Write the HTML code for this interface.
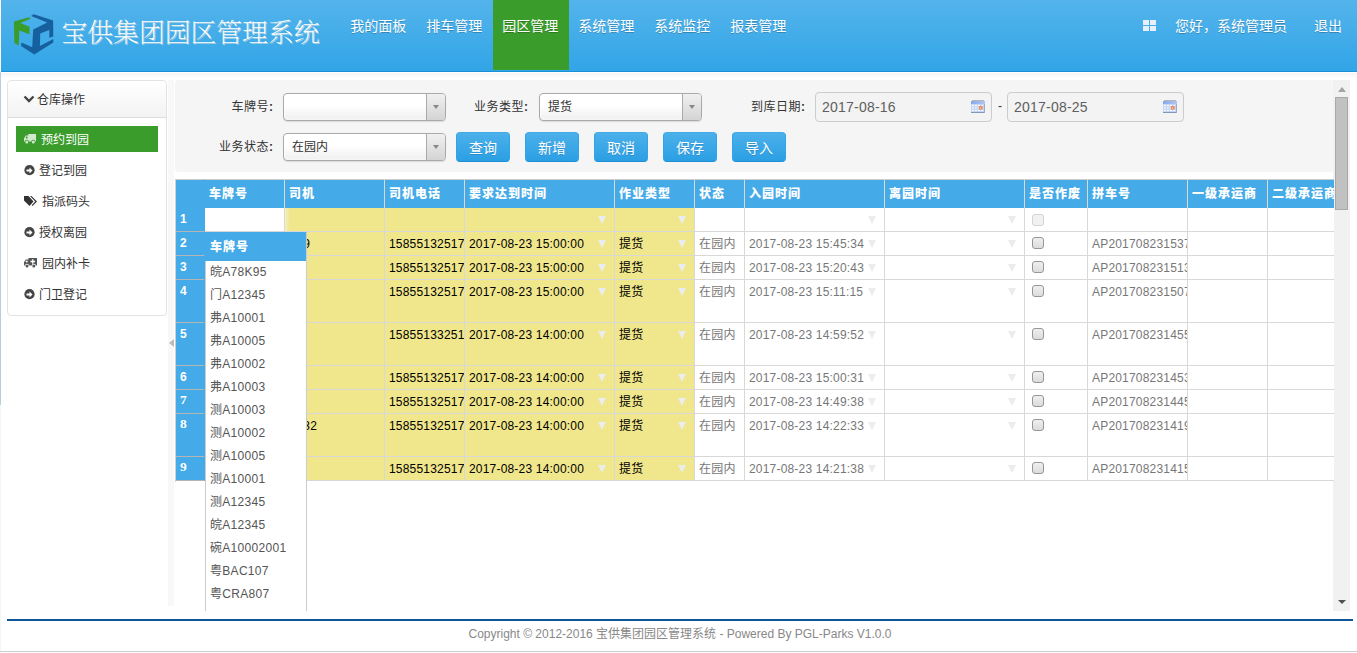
<!DOCTYPE html>
<html lang="zh-CN">
<head>
<meta charset="utf-8">
<title>宝供集团园区管理系统</title>
<style>
*{box-sizing:border-box;margin:0;padding:0}
html,body{width:1357px;height:653px;overflow:hidden;background:#fff}
body{font-family:"Liberation Sans","Noto Sans CJK SC",sans-serif;font-size:13px;color:#333;position:relative}
.abs{position:absolute}
/* header */
#hdr{position:absolute;left:1px;top:0;width:1356px;height:72px;background:linear-gradient(#54b4eb,#31a5e7);border-bottom:1px solid #1a90d8}
#title{position:absolute;left:60.5px;top:14px;font-family:"Liberation Serif","Noto Serif CJK SC",serif;font-weight:200;font-size:25.8px;line-height:40px;color:#fff;white-space:nowrap;letter-spacing:0;text-shadow:1px 1px 0 rgba(255,235,220,.55)}
.nav{padding-right:1.500px;text-shadow:0 1px 0 rgba(0,0,0,.22);position:absolute;top:0;height:70px;line-height:52px;color:#fff;font-size:14px;white-space:nowrap;text-align:center}
.nav.act{background:#3a9d2b}
/* sidebar */
#side{position:absolute;left:7px;top:80px;width:160px;height:236px;border:1px solid #e3e3e3;border-radius:4px;background:#fff}
#side .hd{height:37px;border-bottom:1px solid #ddd;background:linear-gradient(#fff,#f3f3f3);border-radius:4px 4px 0 0;line-height:38px;padding-left:15px;color:#333;font-size:12px}
.mi{position:absolute;left:8px;width:142px;height:26px;line-height:28px;font-size:12px;color:#333;white-space:nowrap}
.mi.on{background:#3a9d2b;color:#fff}
.mi svg{position:absolute;left:8px;top:8px}
.mi span{position:absolute;left:23px;top:0}
/* filter */
#flt{position:absolute;left:175px;top:80px;width:1159px;height:92px;background:#f5f5f5;border-radius:4px}
.lbl{position:absolute;letter-spacing:.5px;margin-left:-1.500px;font-size:12px;color:#333;line-height:20px;text-align:right;white-space:nowrap}
.sel{position:absolute;height:28px;width:163px;border:1px solid #aaa;border-radius:4px;background:linear-gradient(#fff 45%,#f5f5f5 80%,#f0f0f0);box-shadow:0 0 3px #fff inset,0 1px 1px rgba(0,0,0,.1);font-size:12px;line-height:26px;padding-left:8px;color:#333}
.sel i{position:absolute;right:0;top:0;width:19px;height:26px;border-left:1px solid #aaa;border-radius:0 3px 3px 0;background:linear-gradient(#f0f0f0,#d4d4d4)}
.sel i:after{content:"";position:absolute;left:5.500px;top:11px;border:3.300px solid transparent;border-top:4.500px solid #888;border-bottom:0}
.dt{position:absolute;height:30px;width:177px;border:1px solid #ccc;border-radius:4px;background:#f3f3f3;font-size:14px;line-height:28px;padding-left:6px;color:#606060;letter-spacing:.22px}
.dt svg{position:absolute;right:6px;top:7px}
.btn{position:absolute;height:30px;width:54px;border-radius:4px;background:linear-gradient(#4cb0ea,#2b9fe4);border:1px solid #2fa4e7;border-top-color:#45abe8;border-bottom-color:#2090d6;color:#fff;font-size:14px;line-height:30px;text-align:center;text-shadow:0 1px 0 rgba(0,0,0,.15)}
/* grid */
#grid{position:absolute;left:176px;top:179px;width:1158px;height:303px;overflow:hidden;font-size:12px}
.row{position:absolute;left:0;width:1200px}
.c{position:absolute;top:0;height:100%;border-right:1px solid #d8d8d8;border-bottom:1px solid #d8d8d8;overflow:hidden;white-space:nowrap;padding:0 4px;line-height:24px;font-size:12px;letter-spacing:.19px}
.h .c{background:#45aae8;color:#fff;font-weight:900;line-height:28px;font-size:12px;border-top:1px solid #ccc;border-bottom:0;letter-spacing:1px}
.h .c:first-child{border-right-color:#45aae8}
.c.rh{background:#45aae8;color:#fff;font-weight:bold;font-size:12px;border-right-color:#45aae8;border-bottom-color:#b5b5b5;padding-left:4px;line-height:23px}
.y{background:#f0e68c;color:#000}
.g{color:#777;background:#fff}
.w{background:#fff}
.ar:after{content:"";position:absolute;right:8px;top:8px;border-left:4.200px solid transparent;border-right:4.200px solid transparent;border-top:8px solid #ececec}
.cb{position:absolute;left:7px;top:5px;width:12px;height:12px;border:1px solid #979797;border-radius:3px;background:linear-gradient(#efefef,#dcdcdc)}
.cb.dis{top:6px;border-color:#d3d3d3;background:#f1f1f1}
.c.rh.sf{font-family:"Liberation Serif",serif;font-size:13.500px;line-height:20px}
/* dropdown */
#dd{position:absolute;left:205px;top:232px;width:102px;height:379px;background:#fff;border-left:1px solid #ccc;border-right:1px solid #ccc}
#dd .t{letter-spacing:1px;height:29px;overflow:hidden;background:#45aae8;color:#fff;font-weight:900;font-size:12px;line-height:31px;padding-left:5px;width:101px;margin-left:-1px}
#dd .o{height:23px;line-height:22px;padding-left:4px;font-size:12px;color:#555;white-space:nowrap;letter-spacing:.3px}
/* footer */
#ftl{position:absolute;left:7px;top:619px;width:1346px;height:2px;background:#0d5799}
#ft{position:absolute;left:7px;top:621px;width:1346px;height:26px;line-height:26px;text-align:center;font-size:12px;color:#888}
#btm{position:absolute;left:0;top:651px;width:1357px;height:1px;background:#ccc}
</style>
</head>
<body>
<div class="abs" style="left:0;top:72px;width:1px;height:333px;background:#b9cedc"></div>
<div class="abs" style="left:0;top:405px;width:1px;height:246px;background:#f3f5f6"></div>
<div id="hdr">
<svg class="abs" style="left:0;top:0" width="70" height="71" viewBox="1 0 70 71"><polygon fill="#3a9d2b" points="13.9,21.4 29,17.2 30.6,18.8 20.4,23 29.5,26.8 29.5,34.3 19.3,30.6 18.8,45.6 14.3,42.9"/><polygon fill="#17609f" points="31.1,15.9 33.8,14.3 53.1,20.4 53.3,36.5 49.3,37.7 49.3,30 40.2,33.5 39.9,45.9 53.3,39.1 53.3,42.4 34.3,54.4 21.1,46.1 21.4,42.4 32.2,47.2 33.2,29.5 47.2,22.5"/></svg>
<div id="title">宝供集团园区管理系统</div>
<div class="nav" style="left:340px;width:76px">我的面板</div>
<div class="nav" style="left:416px;width:76px">排车管理</div>
<div class="nav act" style="left:492px;width:76px">园区管理</div>
<div class="nav" style="left:568px;width:76px">系统管理</div>
<div class="nav" style="left:644px;width:76px">系统监控</div>
<div class="nav" style="left:720px;width:76px">报表管理</div>
<svg class="abs" style="left:1142px;top:20px" width="14" height="12"><rect x="0" y="0" width="6" height="5" fill="#e6effb"/><rect x="7" y="0" width="6" height="5" fill="#e6effb"/><rect x="0" y="6" width="6" height="5" fill="#e6effb"/><rect x="7" y="6" width="6" height="5" fill="#e6effb"/></svg>
<div class="nav" style="left:1174px;width:112px;text-align:left">您好，系统管理员</div>
<div class="nav" style="left:1313px;width:30px;text-align:left">退出</div>
</div>

<div id="side">
<div class="hd"><svg width="12" height="10" viewBox="0 0 12 10" style="margin-right:2px"><path d="M1.500 2.500 L6 7 L10.500 2.500" fill="none" stroke="#444" stroke-width="2.400"/></svg>仓库操作</div>
<div class="mi on" style="top:45px"><svg width="12" height="10" viewBox="0 0 12 10"><path fill="#d3e9cf" d="M4.300 0H12V7.500H0V4.200L1.800 1.500H4.300z"/><rect x="1.800" y="2.600" width="1.700" height="1.800" fill="#3a9d2b"/><circle cx="2.800" cy="7.900" r="2.100" fill="#3a9d2b"/><circle cx="9.300" cy="7.900" r="2.100" fill="#3a9d2b"/><circle cx="2.800" cy="8" r="1.500" fill="#d3e9cf"/><circle cx="9.300" cy="8" r="1.500" fill="#d3e9cf"/></svg><span style="left:25px">预约到园</span></div>
<div class="mi" style="top:76px"><svg width="11" height="11" viewBox="0 0 11 11"><circle cx="5.500" cy="5.200" r="5.100" fill="#444"/><path d="M2.5 4.5h3V2.5l3 3-3 3V6.500h-3z" fill="#fff"/></svg><span>登记到园</span></div>
<div class="mi" style="top:107px"><svg width="14" height="11" viewBox="0 0 14 11"><path fill="#333" d="M0 0h4.500l5 5.500-4 4.500-5.500-5.500z M6 0h1.500l5.500 5.500-4.500 4.500-.8-.8 3.500-3.700z"/></svg><span style="left:26px">指派码头</span></div>
<div class="mi" style="top:138px"><svg width="11" height="11" viewBox="0 0 11 11"><circle cx="5.500" cy="5.200" r="5.100" fill="#444"/><path d="M2.5 4.500h3V2.500l3 3-3 3V6.500h-3z" fill="#fff"/></svg><span>授权离园</span></div>
<div class="mi" style="top:169px"><svg width="13" height="10" viewBox="0 0 13 10"><path fill="#555" d="M4.500 0H13V7.500H0V4.200L1.800 1.500H4.500z"/><rect x="1.800" y="2.600" width="1.800" height="1.800" fill="#fff"/><path d="M6.500 3.500h4.500M8.750 1.200v4.600" stroke="#fff" stroke-width="1.300"/><circle cx="3" cy="7.900" r="2.100" fill="#fff"/><circle cx="9.800" cy="7.900" r="2.100" fill="#fff"/><circle cx="3" cy="8" r="1.500" fill="#555"/><circle cx="9.800" cy="8" r="1.500" fill="#555"/></svg><span style="left:26px">园内补卡</span></div>
<div class="mi" style="top:200px"><svg width="11" height="11" viewBox="0 0 11 11"><circle cx="5.500" cy="5.200" r="5.100" fill="#444"/><path d="M2.500 4.500h3V2.500l3 3-3 3V6.500h-3z" fill="#fff"/></svg><span>门卫登记</span></div>
</div>

<!-- splitter -->
<div class="abs" style="left:1px;top:73px;width:1356px;height:6px;background:linear-gradient(#f5f5f5,#fff)"></div>
<div class="abs" style="left:168px;top:80px;width:6px;height:526px;background:#f8f8f8"></div>
<div class="abs" style="left:169px;top:339px;border:4px solid transparent;border-right:5px solid #bbb;border-left:0"></div>

<div id="flt">
<div class="lbl" style="left:30px;top:17px;width:70px">车牌号<b>:</b></div>
<div class="sel" style="left:108px;top:13px"><i></i></div>
<div class="lbl" style="left:285px;top:17px;width:70px">业务类型<b>:</b></div>
<div class="sel" style="left:364px;top:13px">提货<i></i></div>
<div class="lbl" style="left:560px;top:17px;width:72px">到库日期<b>:</b></div>
<div class="dt" style="left:640px;top:12px">2017-08-16<svg width="14" height="13" viewBox="0 0 14 13"><defs><linearGradient id="cg" x1="0" y1="0" x2="1" y2="0"><stop offset="0" stop-color="#84a7ee"/><stop offset="1" stop-color="#adc6f4"/></linearGradient></defs><rect x="1" y="0" width="12" height="1.200" fill="#b5b5b5"/><rect x="0" y="1" width="14" height="12" fill="#c5d6f2"/><rect x="0" y="1" width="14" height="3" fill="url(#cg)"/><path d="M1 5.500h12M1 8h12M1 10.500h12" stroke="#fff" stroke-width="1.200" stroke-dasharray="1.800 1.200"/><rect x="0" y="12" width="14" height="1" fill="#8197b9"/><rect x="13" y="4" width="1" height="9" fill="#9aaccb"/><circle cx="9.800" cy="7.700" r="2.100" fill="#e8825f"/><rect x="9.500" y="6.600" width=".7" height="2.200" fill="#fbe3d8"/></svg></div>
<div class="lbl" style="left:824.5px;top:16px">-</div>
<div class="dt" style="left:832px;top:12px">2017-08-25<svg width="14" height="13" viewBox="0 0 14 13"><rect x="1" y="0" width="12" height="1.200" fill="#b5b5b5"/><rect x="0" y="1" width="14" height="12" fill="#c5d6f2"/><rect x="0" y="1" width="14" height="3" fill="url(#cg)"/><path d="M1 5.500h12M1 8h12M1 10.500h12" stroke="#fff" stroke-width="1.200" stroke-dasharray="1.800 1.200"/><rect x="0" y="12" width="14" height="1" fill="#8197b9"/><rect x="13" y="4" width="1" height="9" fill="#9aaccb"/><circle cx="9.800" cy="7.700" r="2.100" fill="#e8825f"/><rect x="9.500" y="6.600" width=".7" height="2.200" fill="#fbe3d8"/></svg></div>
<div class="lbl" style="left:30px;top:57px;width:70px">业务状态<b>:</b></div>
<div class="sel" style="left:108px;top:53px">在园内<i></i></div>
<div class="btn" style="left:281px;top:52px">查询</div>
<div class="btn" style="left:350px;top:52px">新增</div>
<div class="btn" style="left:419px;top:52px">取消</div>
<div class="btn" style="left:488px;top:52px">保存</div>
<div class="btn" style="left:557px;top:52px">导入</div>
</div>

<!-- scrollbar -->
<div class="abs" style="left:1333px;top:80px;width:17px;height:531px;background:#f1f1f1"></div>
<div class="abs" style="left:1335px;top:97px;width:13px;height:113px;background:#c1c1c1;border:1px solid #a8a8a8"></div>
<div class="abs" style="left:1337.500px;top:86.500px;border:4px solid transparent;border-bottom:5px solid #a3a3a3;border-top:0"></div>
<div class="abs" style="left:1337.500px;top:600px;border:4px solid transparent;border-top:4.500px solid #505050;border-bottom:0"></div>

<div class="abs" style="left:175px;top:179px;width:1px;height:303px;background:#d0d0d0"></div>
<div id="grid">
<div class="row h" style="top:0;height:29px">
<div class="c" style="left:0px;width:29px"></div>
<div class="c" style="left:29px;width:80px">车牌号</div>
<div class="c" style="left:109px;width:100px">司机</div>
<div class="c" style="left:209px;width:80px">司机电话</div>
<div class="c" style="left:289px;width:150px">要求达到时间</div>
<div class="c" style="left:439px;width:80px">作业类型</div>
<div class="c" style="left:519px;width:50px">状态</div>
<div class="c" style="left:569px;width:140px">入园时间</div>
<div class="c" style="left:709px;width:140px">离园时间</div>
<div class="c" style="left:849px;width:63px">是否作废</div>
<div class="c" style="left:912px;width:100px">拼车号</div>
<div class="c" style="left:1012px;width:80px">一级承运商</div>
<div class="c" style="left:1092px;width:80px">二级承运商</div>
</div>
<div class="row" style="top:29px;height:24px">
<div class="c rh" style="left:0px;width:29px">1</div>
<div class="c w" style="left:29px;width:80px"></div>
<div class="c y" style="left:109px;width:100px;background:linear-gradient(to right,#f6f1bd,#f0e68c 5px)"></div>
<div class="c y" style="left:209px;width:80px"></div>
<div class="c y ar" style="left:289px;width:150px"></div>
<div class="c y ar" style="left:439px;width:80px"></div>
<div class="c g" style="left:519px;width:50px"></div>
<div class="c g ar" style="left:569px;width:140px"></div>
<div class="c g ar" style="left:709px;width:140px"></div>
<div class="c w" style="left:849px;width:63px"><span class="cb dis"></span></div>
<div class="c g" style="left:912px;width:100px"></div>
<div class="c w" style="left:1012px;width:80px"></div>
<div class="c w" style="left:1092px;width:80px"></div>
</div>
<div class="row" style="top:53px;height:24px">
<div class="c rh" style="left:0px;width:29px">2</div>
<div class="c w" style="left:29px;width:80px"></div>
<div class="c y" style="left:109px;width:100px"><span style="display:block;text-align:right;margin-right:70px">9</span></div>
<div class="c y" style="left:209px;width:80px">15855132517</div>
<div class="c y ar" style="left:289px;width:150px">2017-08-23 15:00:00</div>
<div class="c y ar" style="left:439px;width:80px">提货</div>
<div class="c g" style="left:519px;width:50px">在园内</div>
<div class="c g ar" style="left:569px;width:140px">2017-08-23 15:45:34</div>
<div class="c g ar" style="left:709px;width:140px"></div>
<div class="c w" style="left:849px;width:63px"><span class="cb"></span></div>
<div class="c g" style="left:912px;width:100px">AP2017082315374</div>
<div class="c w" style="left:1012px;width:80px"></div>
<div class="c w" style="left:1092px;width:80px"></div>
</div>
<div class="row" style="top:77px;height:24px">
<div class="c rh" style="left:0px;width:29px">3</div>
<div class="c w" style="left:29px;width:80px"></div>
<div class="c y" style="left:109px;width:100px"></div>
<div class="c y" style="left:209px;width:80px">15855132517</div>
<div class="c y ar" style="left:289px;width:150px">2017-08-23 15:00:00</div>
<div class="c y ar" style="left:439px;width:80px">提货</div>
<div class="c g" style="left:519px;width:50px">在园内</div>
<div class="c g ar" style="left:569px;width:140px">2017-08-23 15:20:43</div>
<div class="c g ar" style="left:709px;width:140px"></div>
<div class="c w" style="left:849px;width:63px"><span class="cb"></span></div>
<div class="c g" style="left:912px;width:100px">AP2017082315134</div>
<div class="c w" style="left:1012px;width:80px"></div>
<div class="c w" style="left:1092px;width:80px"></div>
</div>
<div class="row" style="top:101px;height:43px">
<div class="c rh" style="left:0px;width:29px">4</div>
<div class="c w" style="left:29px;width:80px"></div>
<div class="c y" style="left:109px;width:100px"></div>
<div class="c y" style="left:209px;width:80px">15855132517</div>
<div class="c y ar" style="left:289px;width:150px">2017-08-23 15:00:00</div>
<div class="c y ar" style="left:439px;width:80px">提货</div>
<div class="c g" style="left:519px;width:50px">在园内</div>
<div class="c g ar" style="left:569px;width:140px">2017-08-23 15:11:15</div>
<div class="c g ar" style="left:709px;width:140px"></div>
<div class="c w" style="left:849px;width:63px"><span class="cb"></span></div>
<div class="c g" style="left:912px;width:100px">AP2017082315074</div>
<div class="c w" style="left:1012px;width:80px"></div>
<div class="c w" style="left:1092px;width:80px"></div>
</div>
<div class="row" style="top:144px;height:43px">
<div class="c rh" style="left:0px;width:29px">5</div>
<div class="c w" style="left:29px;width:80px"></div>
<div class="c y" style="left:109px;width:100px"></div>
<div class="c y" style="left:209px;width:80px">15855133251</div>
<div class="c y ar" style="left:289px;width:150px">2017-08-23 14:00:00</div>
<div class="c y ar" style="left:439px;width:80px">提货</div>
<div class="c g" style="left:519px;width:50px">在园内</div>
<div class="c g ar" style="left:569px;width:140px">2017-08-23 14:59:52</div>
<div class="c g ar" style="left:709px;width:140px"></div>
<div class="c w" style="left:849px;width:63px"><span class="cb"></span></div>
<div class="c g" style="left:912px;width:100px">AP2017082314554</div>
<div class="c w" style="left:1012px;width:80px"></div>
<div class="c w" style="left:1092px;width:80px"></div>
</div>
<div class="row" style="top:187px;height:24px">
<div class="c rh" style="left:0px;width:29px">6</div>
<div class="c w" style="left:29px;width:80px"></div>
<div class="c y" style="left:109px;width:100px"></div>
<div class="c y" style="left:209px;width:80px">15855132517</div>
<div class="c y ar" style="left:289px;width:150px">2017-08-23 14:00:00</div>
<div class="c y ar" style="left:439px;width:80px">提货</div>
<div class="c g" style="left:519px;width:50px">在园内</div>
<div class="c g ar" style="left:569px;width:140px">2017-08-23 15:00:31</div>
<div class="c g ar" style="left:709px;width:140px"></div>
<div class="c w" style="left:849px;width:63px"><span class="cb"></span></div>
<div class="c g" style="left:912px;width:100px">AP2017082314534</div>
<div class="c w" style="left:1012px;width:80px"></div>
<div class="c w" style="left:1092px;width:80px"></div>
</div>
<div class="row" style="top:211px;height:24px">
<div class="c rh sf" style="left:0px;width:29px">7</div>
<div class="c w" style="left:29px;width:80px"></div>
<div class="c y" style="left:109px;width:100px"></div>
<div class="c y" style="left:209px;width:80px">15855132517</div>
<div class="c y ar" style="left:289px;width:150px">2017-08-23 14:00:00</div>
<div class="c y ar" style="left:439px;width:80px">提货</div>
<div class="c g" style="left:519px;width:50px">在园内</div>
<div class="c g ar" style="left:569px;width:140px">2017-08-23 14:49:38</div>
<div class="c g ar" style="left:709px;width:140px"></div>
<div class="c w" style="left:849px;width:63px"><span class="cb"></span></div>
<div class="c g" style="left:912px;width:100px">AP2017082314454</div>
<div class="c w" style="left:1012px;width:80px"></div>
<div class="c w" style="left:1092px;width:80px"></div>
</div>
<div class="row" style="top:235px;height:43px">
<div class="c rh sf" style="left:0px;width:29px">8</div>
<div class="c w" style="left:29px;width:80px"></div>
<div class="c y" style="left:109px;width:100px"><span style="display:block;text-align:right;margin-right:63px">32</span></div>
<div class="c y" style="left:209px;width:80px">15855132517</div>
<div class="c y ar" style="left:289px;width:150px">2017-08-23 14:00:00</div>
<div class="c y ar" style="left:439px;width:80px">提货</div>
<div class="c g" style="left:519px;width:50px">在园内</div>
<div class="c g ar" style="left:569px;width:140px">2017-08-23 14:22:33</div>
<div class="c g ar" style="left:709px;width:140px"></div>
<div class="c w" style="left:849px;width:63px"><span class="cb"></span></div>
<div class="c g" style="left:912px;width:100px">AP2017082314194</div>
<div class="c w" style="left:1012px;width:80px"></div>
<div class="c w" style="left:1092px;width:80px"></div>
</div>
<div class="row" style="top:278px;height:24px">
<div class="c rh sf" style="left:0px;width:29px">9</div>
<div class="c w" style="left:29px;width:80px"></div>
<div class="c y" style="left:109px;width:100px"></div>
<div class="c y" style="left:209px;width:80px">15855132517</div>
<div class="c y ar" style="left:289px;width:150px">2017-08-23 14:00:00</div>
<div class="c y ar" style="left:439px;width:80px">提货</div>
<div class="c g" style="left:519px;width:50px">在园内</div>
<div class="c g ar" style="left:569px;width:140px">2017-08-23 14:21:38</div>
<div class="c g ar" style="left:709px;width:140px"></div>
<div class="c w" style="left:849px;width:63px"><span class="cb"></span></div>
<div class="c g" style="left:912px;width:100px">AP2017082314154</div>
<div class="c w" style="left:1012px;width:80px"></div>
<div class="c w" style="left:1092px;width:80px"></div>
</div>
</div><!--/grid-->

<div id="dd">
<div class="t">车牌号</div>
<div class="o">皖A78K95</div>
<div class="o">门A12345</div>
<div class="o">弗A10001</div>
<div class="o">弗A10005</div>
<div class="o">弗A10002</div>
<div class="o">弗A10003</div>
<div class="o">测A10003</div>
<div class="o">测A10002</div>
<div class="o">测A10005</div>
<div class="o">测A10001</div>
<div class="o">测A12345</div>
<div class="o">皖A12345</div>
<div class="o">碗A10002001</div>
<div class="o">粤BAC107</div>
<div class="o">粤CRA807</div>
</div>

<div id="ftl"></div>
<div id="ft">Copyright © 2012-2016 宝供集团园区管理系统 - Powered By PGL-Parks V1.0.0</div>
<div id="btm"></div>
</body>
</html>
